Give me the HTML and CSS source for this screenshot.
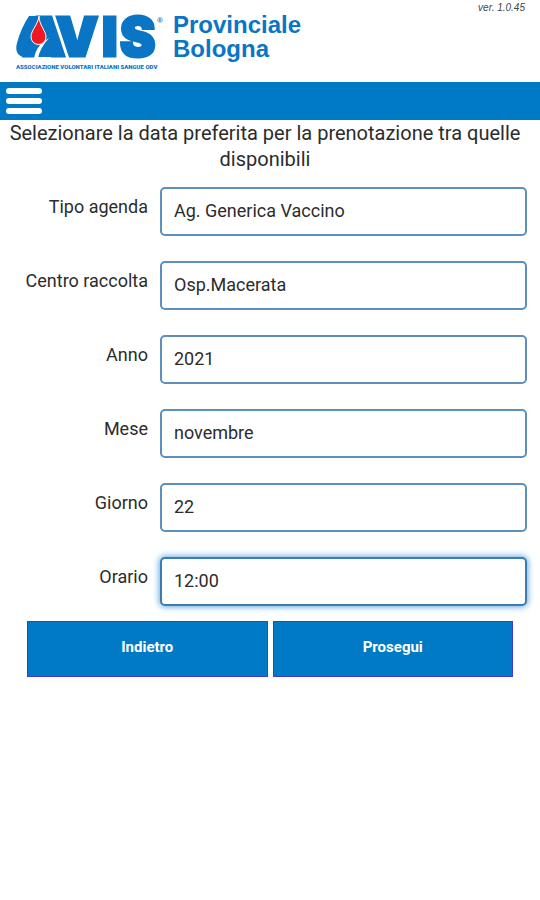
FILE: index.html
```html
<!DOCTYPE html>
<html lang="it">
<head>
<meta charset="utf-8">
<meta name="viewport" content="width=device-width, initial-scale=1">
<title>AVIS Provinciale Bologna</title>
<link rel="stylesheet" href="styles.css">
</head>
<body>
<header class="brand">
  <svg class="logo" width="152" height="60" viewBox="0 0 152 60" role="img" aria-label="AVIS">
    <text class="logo-name" x="8 41 87 105" y="45">AVIS</text>
    <path class="logo-leaf" d="M14 5H36L50 46H8Q-1 43 2 32Q6 17 14 5Z"/>
    <path class="logo-gap" d="M28 31L34 27Q25 37 23 47H19Q21 37 28 31Z"/>
    <path class="logo-drop" d="M24 5C23 14 16 19 16 26A7 7 0 0 0 31 26C31 20 24 14 24 5Z"/>
    <text class="logo-mark" x="142" y="12">®</text>
    <text class="logo-caption" x="1" y="58">ASSOCIAZIONE VOLONTARI ITALIANI SANGUE ODV</text>
  </svg>
  <p class="branch">Provinciale<br>Bologna</p>
  <p class="version">ver. 1.0.45</p>
</header>
<nav class="bar">
  <button class="menu" type="button" aria-label="Menu"><span></span><span></span><span></span></button>
</nav>
<main>
  <h1 class="title">Selezionare la data preferita per la prenotazione tra quelle disponibili</h1>
  <form class="form">
    <div class="row"><label for="agenda">Tipo agenda</label><select id="agenda"><option>Ag. Generica Vaccino</option></select></div>
    <div class="row"><label for="centro">Centro raccolta</label><select id="centro"><option>Osp.Macerata</option></select></div>
    <div class="row"><label for="anno">Anno</label><select id="anno"><option>2021</option></select></div>
    <div class="row"><label for="mese">Mese</label><select id="mese"><option>novembre</option></select></div>
    <div class="row"><label for="giorno">Giorno</label><select id="giorno"><option>22</option></select></div>
    <div class="row"><label for="orario">Orario</label><select id="orario" class="active"><option>12:00</option></select></div>
    <div class="actions">
      <button type="button">Indietro</button>
      <button type="button">Prosegui</button>
    </div>
  </form>
</main>
</body>
</html>
```
FILE: styles.css
```css
* { box-sizing: border-box; }
body {
  margin: 0;
  background: #fff;
  color: #2c2c2c;
  font-family: Roboto, "Liberation Sans", sans-serif;
}
p, h1 { margin: 0; }
.brand {
  display: flex;
  align-items: flex-start;
  height: 82px;
  padding-left: 15px;
  padding-right: 15px;
}
.logo { flex: none; margin-top: 11px; overflow: visible; }
.logo-name {
  font: 900 53px Inter, sans-serif;
  fill: #0b75c5;
  stroke: #0b75c5;
  stroke-width: 3;
}
.logo-leaf { fill: #0b75c5; }
.logo-gap { fill: #fff; }
.logo-drop { fill: #f01822; stroke: #fff; stroke-width: 1; }
.logo-mark { font: 700 8px "Liberation Sans", sans-serif; fill: #0b75c5; }
.logo-caption { font: 900 6px Roboto, sans-serif; fill: #0b75c5; }
.branch {
  margin-top: 13px;
  margin-left: 6px;
  color: #0b75c5;
  font: 700 24px/24px "Liberation Sans", sans-serif;
}
.version {
  margin-left: auto;
  color: #444;
  font: italic 10px/15px "Liberation Sans", sans-serif;
}
.bar {
  display: flex;
  align-items: center;
  height: 38px;
  padding-left: 6px;
  background: #007ac5;
}
.menu {
  display: flex;
  flex-direction: column;
  gap: 4px;
  width: 36px;
  padding: 0;
  border: 0;
  background: none;
}
.menu span { height: 6px; border-radius: 3px; background: #fff; }
.title {
  padding-right: 10px;
  font-size: 20px;
  font-weight: 400;
  line-height: 26px;
  text-align: center;
}
.form {
  display: flex;
  flex-direction: column;
  gap: 25px;
  padding: 15px 13px 0;
}
.row {
  display: grid;
  grid-template-columns: 135px 1fr;
  column-gap: 12px;
}
.row label {
  padding-top: 8px;
  font-size: 18px;
  line-height: 24px;
  text-align: right;
}
.row select {
  appearance: none;
  width: 100%;
  height: 49px;
  padding: 0 12px 2px;
  border: 2px solid #5c8fbd;
  border-radius: 5px;
  background: #fff;
  color: #2c2c2c;
  font: 18px/24px Roboto, "Liberation Sans", sans-serif;
}
.row select.active {
  border-color: #3f7cae;
  box-shadow: 0 0 6px 1px #60a8e0;
}
.actions {
  display: grid;
  grid-template-columns: 1fr 1fr;
  gap: 5px;
  margin-top: -10px;
  padding: 0 14px;
}
.actions button {
  height: 56px;
  padding: 0 0 4px;
  border: 1px solid #3a3ae0;
  background: #007ac5;
  color: #fff;
  font: 700 15px/20px Roboto, "Liberation Sans", sans-serif;
}
```
